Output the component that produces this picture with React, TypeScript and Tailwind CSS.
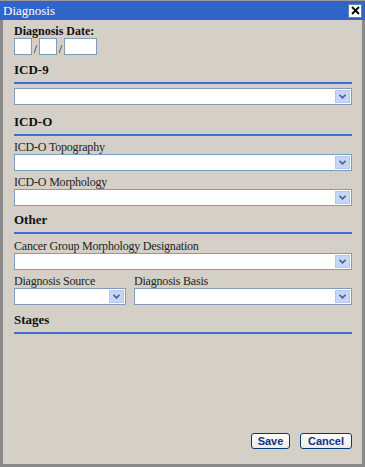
const SERIF = "font-['Liberation_Serif','Times_New_Roman',serif]"

function SelectBox({ className = '' }: { className?: string }) {
  return (
    <div className={`h-[17px] border border-[#7f9db9] bg-white flex items-center justify-end pr-px ${className}`}>
      <div className="w-[15px] h-[13px] bg-[#c6d6fb] border border-[#b5c8f0] flex items-center justify-center">
        <svg width="7" height="5" viewBox="0 0 7 5">
          <path d="M0.5 0.8 L3.5 3.8 L6.5 0.8" fill="none" stroke="#4d6185" strokeWidth="1.6" />
        </svg>
      </div>
    </div>
  )
}

function Heading({ title, mt }: { title: string; mt: string }) {
  return (
    <>
      <div className={`${mt} ${SERIF} font-bold text-[13px] leading-[15px] text-[#111]`}>{title}</div>
      <div className="mt-[5px] h-[2px] bg-[#3f6fd6]" />
    </>
  )
}

function Label({ text, mt = '' }: { text: string; mt?: string }) {
  return <div className={`${mt} ${SERIF} text-[12px] leading-[13px] tracking-[-0.2px] text-[#222]`}>{text}</div>
}

export default function App() {
  return (
    <div className="w-[365px] h-[467px] flex flex-col bg-[#d4d0c8] border-t border-[#9a9a9a]">
      <div className="h-[19px] bg-[#3064c6] flex items-center justify-between pl-[3px] pr-[3px]">
        <span className={`${SERIF} text-white text-[13px] leading-[15px]`}>Diagnosis</span>
        <div className="w-[14px] h-[14px] bg-white border border-[#6b7fa8] flex items-center justify-center">
          <svg width="9" height="9" viewBox="0 0 9 9">
            <path d="M1 1 L8 8 M8 1 L1 8" stroke="#000" strokeWidth="1.8" />
          </svg>
        </div>
      </div>
      <div className="flex-1 flex flex-col border-l-[3px] border-r-[3px] border-b-[3px] border-l-[#8a8a8a] border-r-[#8a8a8a] border-b-[#8a8a8a] pl-[11px] pr-[10px]">
        <div className={`mt-[5px] ${SERIF} font-bold text-[12px] leading-[13px] text-[#111]`}>Diagnosis Date:</div>
        <div className="flex items-center">
          <div className="w-[18px] h-[17px] border border-[#7f9db9] bg-white" />
          <span className={`${SERIF} w-[7px] text-center text-[12px] leading-[12px] mt-[4px]`}>/</span>
          <div className="w-[18px] h-[17px] border border-[#7f9db9] bg-white" />
          <span className={`${SERIF} w-[7px] text-center text-[12px] leading-[12px] mt-[4px]`}>/</span>
          <div className="w-[33px] h-[17px] border border-[#7f9db9] bg-white" />
        </div>

        <Heading title="ICD-9" mt="mt-[7px]" />
        <SelectBox className="mt-[4px]" />

        <Heading title="ICD-O" mt="mt-[9px]" />
        <Label text="ICD-O Topography" mt="mt-[5px]" />
        <SelectBox />
        <Label text="ICD-O Morphology" mt="mt-[5px]" />
        <SelectBox />

        <Heading title="Other" mt="mt-[6px]" />
        <Label text="Cancer Group Morphology Designation" mt="mt-[6px]" />
        <SelectBox />
        <div className="mt-[5px] flex gap-[8px]">
          <div className="w-[112px]">
            <Label text="Diagnosis Source" />
            <SelectBox />
          </div>
          <div className="flex-1">
            <Label text="Diagnosis Basis" />
            <SelectBox />
          </div>
        </div>

        <Heading title="Stages" mt="mt-[7px]" />

        <div className="flex-1" />
        <div className="flex justify-end gap-[10px] pb-[15px] font-['Liberation_Sans',Arial,sans-serif]">
          <button className="w-[39px] h-[16px] rounded-[3px] border border-[#003c74] bg-gradient-to-b from-white to-[#ecebe6] text-[11px] leading-[14px] font-bold text-[#0f2f8f]">
            Save
          </button>
          <button className="w-[52px] h-[16px] rounded-[3px] border border-[#003c74] bg-gradient-to-b from-white to-[#ecebe6] text-[11px] leading-[14px] font-bold text-[#0f2f8f]">
            Cancel
          </button>
        </div>
      </div>
    </div>
  )
}
